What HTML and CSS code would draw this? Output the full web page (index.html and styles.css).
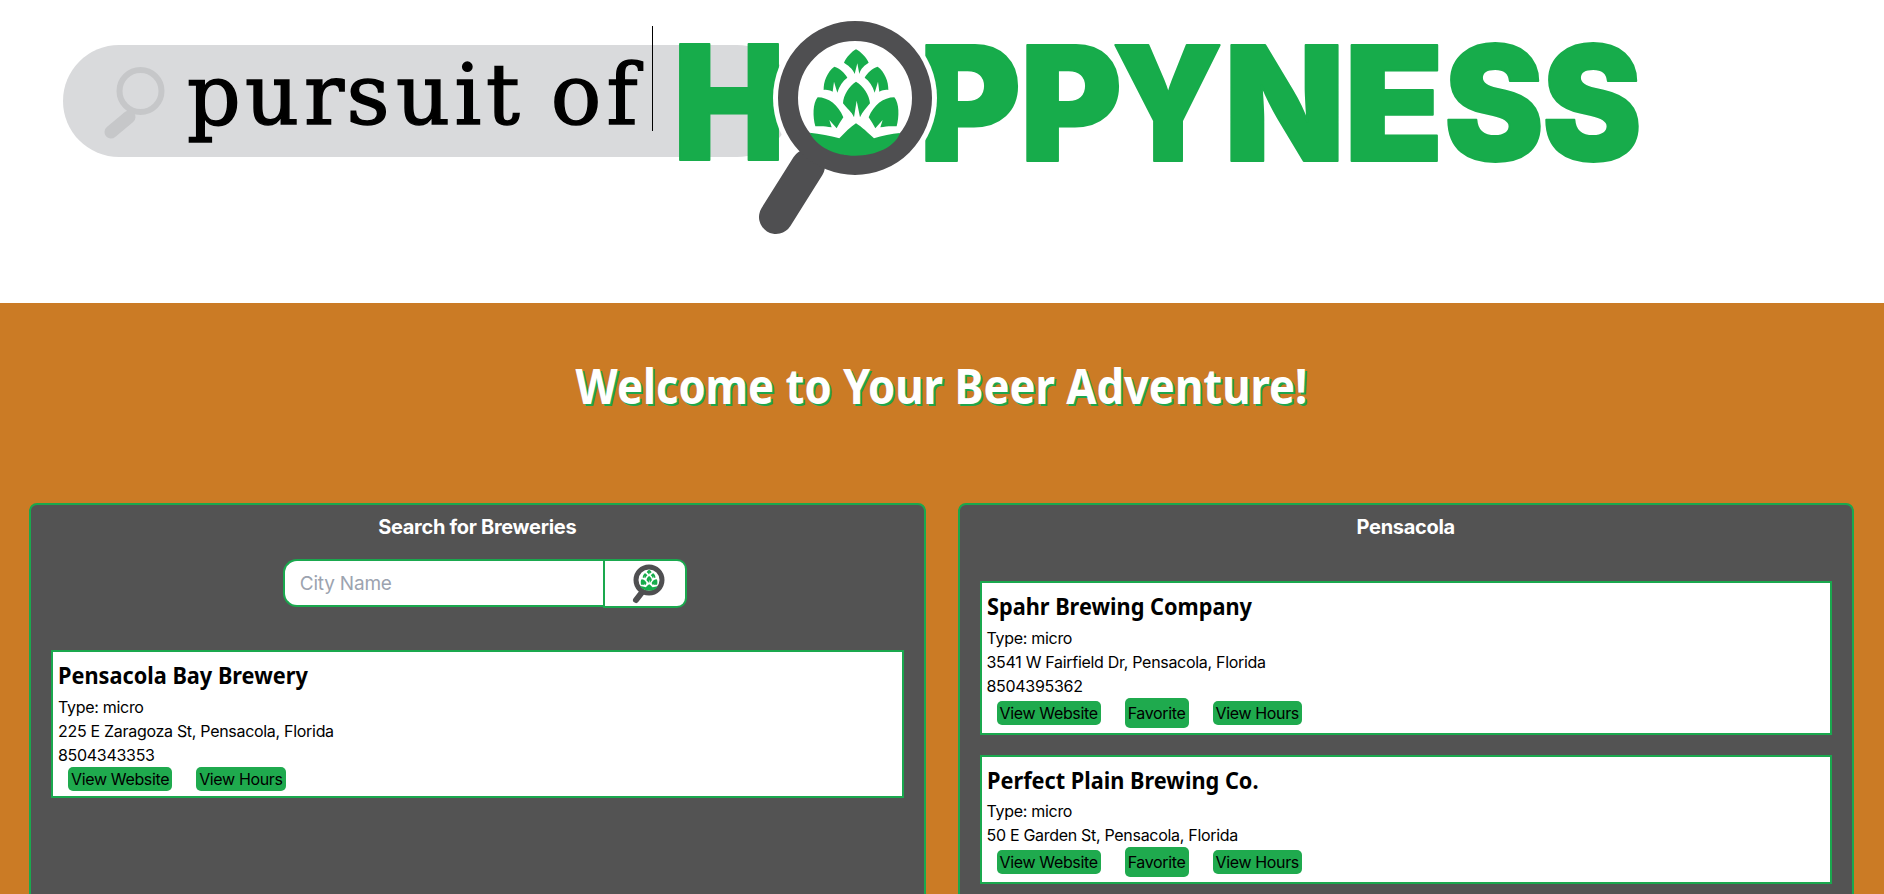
FILE: index.html
```html
<!DOCTYPE html>
<html lang="en">
<head>
<meta charset="utf-8">
<title>Pursuit of Hoppyness</title>
<link rel="stylesheet" href="styles.css">
</head>
<body>
<div class="app">
  <header class="site-header">
    <svg class="logo" viewBox="0 0 1884 303" width="1884" height="303" role="img" aria-label="pursuit of Hoppyness">
      <defs>
        <g id="hop">
          <path d="M348 118C362 125 380 143 386 158C375 165 362 175 358 192L352 160L344 192C338 175 322 165 312 158C318 143 335 125 348 118Z"/>
          <path d="M283 170C300 175 315 190 322 203C308 213 298 228 292 248L282 215L278 245C268 240 258 238 251 240C250 215 262 185 283 170Z"/>
          <path d="M413 170C396 175 381 190 374 203C388 213 398 228 404 248L414 215L418 245C428 240 438 238 445 240C446 215 434 185 413 170Z"/>
          <path d="M348 215C370 228 388 255 390 280C378 295 368 305 360 322L350 272L342 322C335 305 320 295 309 280C310 255 328 228 348 215Z"/>
          <path d="M233 262C265 262 295 285 310 322C302 335 295 345 290 355L268 330L275 352C258 348 240 348 226 349C218 320 218 280 233 262Z"/>
          <path d="M463 262C431 262 401 285 386 322C394 335 401 345 406 355L428 330L421 352C438 348 456 348 470 349C478 320 478 280 463 262Z"/>
          <path d="M209 368C240 372 270 376 298 385C315 368 332 350 348 340C365 350 385 370 402 385C425 376 455 372 480 369C465 410 410 437 345 437C285 437 230 410 209 368Z"/>
        </g>
      </defs>
      <rect class="logo-pill" x="63" y="45" width="730" height="112" rx="56"/>
      <circle class="logo-ghost-ring" cx="140.500" cy="91" r="21"/>
      <line class="logo-ghost-handle" x1="129" y1="117" x2="111" y2="132"/>
      <text class="logo-pursuit" x="214 272 324 368 423 468 503 540 576 622" y="124">pursuit of</text>
      <rect class="logo-rule" x="652" y="26" width="1" height="105"/>
      <g class="logo-word">
        <text x="673" y="160" textLength="112" lengthAdjust="spacingAndGlyphs">H</text>
        <text x="919" y="161" textLength="102" lengthAdjust="spacingAndGlyphs">P</text>
        <text x="1020" y="161" textLength="102" lengthAdjust="spacingAndGlyphs">P</text>
        <text x="1112" y="161" textLength="111" lengthAdjust="spacingAndGlyphs">Y</text>
        <text x="1224" y="161" textLength="121" lengthAdjust="spacingAndGlyphs">N</text>
        <text x="1344" y="161" textLength="100" lengthAdjust="spacingAndGlyphs">E</text>
        <text x="1444" y="161" textLength="100" lengthAdjust="spacingAndGlyphs">S</text>
        <text x="1542" y="161" textLength="100" lengthAdjust="spacingAndGlyphs">S</text>
      </g>
      <circle class="logo-halo" cx="855" cy="98" r="82"/>
      <line class="logo-handle" x1="808" y1="166" x2="776" y2="217"/>
      <circle class="logo-ring" cx="855" cy="98" r="67"/>
      <use href="#hop" class="logo-hop" transform="translate(740 10) scale(.33333)"/>
    </svg>
  </header>

  <main class="content">
    <h1 class="welcome">Welcome to Your Beer Adventure!</h1>
    <div class="panels">
      <section class="panel">
        <h2 class="panel-title">Search for Breweries</h2>
        <form class="search">
          <input class="search-input" type="text" placeholder="City Name">
          <button class="search-button" type="button" aria-label="Search">
            <svg class="search-icon" viewBox="0 0 40 40" width="40" height="40">
              <line class="icon-handle" x1="15" y1="27" x2="8" y2="36"/>
              <circle class="icon-ring" cx="21" cy="16" r="13"/>
              <use href="#hop" class="logo-hop" transform="translate(-1.700 -2) scale(.0655)"/>
            </svg>
          </button>
        </form>
        <article class="card">
          <h3 class="card-title">Pensacola Bay Brewery</h3>
          <p class="card-line">Type: micro</p>
          <p class="card-line">225 E Zaragoza St, Pensacola, Florida</p>
          <p class="card-line">8504343353</p>
          <div class="card-actions">
            <a class="pill" href="#">View Website</a>
            <a class="pill" href="#">View Hours</a>
          </div>
        </article>
      </section>

      <section class="panel">
        <h2 class="panel-title">Pensacola</h2>
        <div class="card-list">
          <article class="card">
            <h3 class="card-title">Spahr Brewing Company</h3>
            <p class="card-line">Type: micro</p>
            <p class="card-line">3541 W Fairfield Dr, Pensacola, Florida</p>
            <p class="card-line">8504395362</p>
            <div class="card-actions">
              <a class="pill" href="#">View Website</a>
              <button class="pill pill-tall" type="button">Favorite</button>
              <a class="pill" href="#">View Hours</a>
            </div>
          </article>
          <article class="card">
            <h3 class="card-title">Perfect Plain Brewing Co.</h3>
            <p class="card-line">Type: micro</p>
            <p class="card-line">50 E Garden St, Pensacola, Florida</p>
            <div class="card-actions">
              <a class="pill" href="#">View Website</a>
              <button class="pill pill-tall" type="button">Favorite</button>
              <a class="pill" href="#">View Hours</a>
            </div>
          </article>
        </div>
      </section>
    </div>
  </main>
</div>
</body>
</html>
```
FILE: styles.css
```css
* { box-sizing: border-box; }

html, body { margin: 0; padding: 0; }

body {
  font-family: Inter, "Liberation Sans", sans-serif;
  font-size: 16px;
  line-height: 24px;
  letter-spacing: -0.3px;
  color: #000;
  background: #fff;
}

.app {
  height: 100vh;
  overflow: hidden;
  display: flex;
  flex-direction: column;
}

.site-header { flex: none; height: 303px; }

.logo { display: block; letter-spacing: 0; }
.logo-pill { fill: #d9dadc; }
.logo-ghost-ring { fill: none; stroke: #c6c7c9; stroke-width: 6; }
.logo-ghost-handle { stroke: #c6c7c9; stroke-width: 13; stroke-linecap: round; }
.logo-pursuit {
  font-family: "DejaVu Serif", serif;
  font-size: 84px;
  text-anchor: middle;
  fill: #000;
  stroke: #000;
  stroke-width: 1.500px;
}
.logo-rule { fill: #000; }
.logo-word {
  font-family: Inter, sans-serif;
  font-weight: 900;
  font-size: 160px;
  fill: #17ac4b;
  stroke: #17ac4b;
  stroke-width: 2px;
  stroke-linejoin: round;
}
.logo-halo { fill: #fff; }
.logo-handle { stroke: #4f4f51; stroke-width: 34; stroke-linecap: round; }
.logo-ring { fill: #fff; stroke: #4f4f51; stroke-width: 20; }
.logo-hop { fill: #17ac4b; stroke: none; }

.content {
  flex: 1;
  background: #cb7b25;
  padding: 0 30px 0 29px;
}

.welcome {
  margin: 0;
  padding-top: 55px;
  height: 200px;
  font-family: "Noto Sans", sans-serif;
  font-size: 48px;
  line-height: 56px;
  font-weight: 700;
  letter-spacing: 0;
  text-align: center;
  color: #fff;
  text-shadow: 2px 2px 0 #1ea64c;
  transform: scaleX(.908);
}

.panels {
  display: grid;
  grid-template-columns: 1fr 1fr;
  column-gap: 32px;
  min-height: 500px;
}

.panel {
  background: #535353;
  border: 2px solid #1aa84e;
  border-radius: 8px;
  padding: 8px 20px 40px;
}

.panel-title {
  margin: 0;
  font-size: 20px;
  line-height: 28px;
  font-weight: 700;
  text-align: center;
  color: #fff;
}

.search {
  display: flex;
  justify-content: center;
  margin: 18px 0 42px;
  padding-left: 16px;
}

.search-input {
  width: 320px;
  height: 48px;
  border: 2px solid #1aa84e;
  border-right-width: 0;
  border-radius: 14px 0 0 14px;
  padding: 0 14.500px;
  font-family: Inter, sans-serif;
  font-size: 19px;
  letter-spacing: -0.2px;
  background: #fff;
  outline: none;
}
.search-input::placeholder { color: #9ca3af; opacity: 1; }

.search-button {
  display: flex;
  align-items: center;
  justify-content: center;
  width: 84px;
  height: 49px;
  padding: 0 0 0 5px;
  background: #fff;
  border: 2px solid #1aa84e;
  border-radius: 0 10px 10px 0;
}

.search-icon { display: block; }
.icon-handle { stroke: #4f4f51; stroke-width: 6; stroke-linecap: round; }
.icon-ring { fill: #fff; stroke: #4f4f51; stroke-width: 5; }

.card-list {
  display: flex;
  flex-direction: column;
  gap: 20px;
  margin-top: 40px;
}

.card {
  background: #fff;
  border: 2px solid #1aa84e;
  padding: 5px;
}

.card-title {
  margin: 0;
  padding-bottom: 1px;
  font-family: "Noto Sans", sans-serif;
  font-size: 24px;
  line-height: 36.500px;
  font-weight: 700;
  letter-spacing: 0;
  transform: scaleX(.905);
  transform-origin: left center;
}

.card-line { margin: 0; font-size: 16px; line-height: 24px; }

.card-actions {
  display: flex;
  align-items: center;
  gap: 24px;
  margin-left: 10px;
}

.pill {
  display: block;
  padding: 0 3px;
  height: 24px;
  line-height: 24px;
  font-family: Inter, sans-serif;
  font-size: 16px;
  letter-spacing: -0.35px;
  color: #000;
  text-decoration: none;
  background: #1faa4e;
  border: 0;
  border-radius: 5px;
}

.pill-tall { height: 30px; }
```
